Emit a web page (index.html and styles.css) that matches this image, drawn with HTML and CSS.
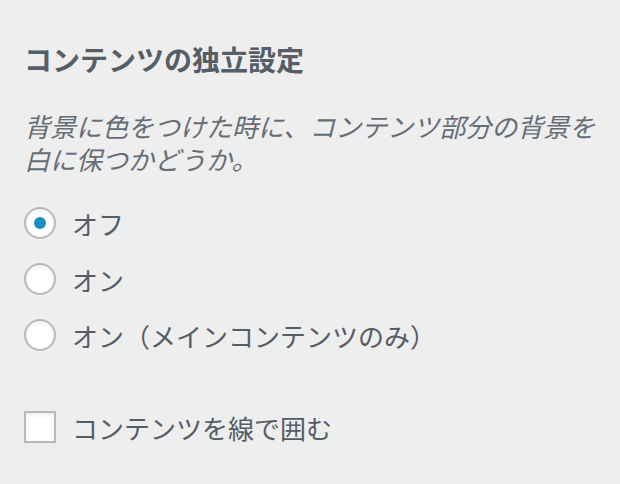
FILE: index.html
```html
<!DOCTYPE html>
<html lang="ja">
<head>
    <meta charset="UTF-8">
    <meta name="viewport" content="width=device-width, initial-scale=1.0">
    <title>コンテンツの独立設定</title>
    <link rel="stylesheet" href="styles.css">
</head>
<body>
    <div class="control">
        <h2 class="control-title">コンテンツの独立設定</h2>
        <p class="control-desc">背景に色をつけた時に、コンテンツ部分の背景を白に保つかどうか。</p>

        <div class="choices">
            <label class="choice">
                <input type="radio" name="content_bg" value="off" checked>
                <span>オフ</span>
            </label>
            <label class="choice">
                <input type="radio" name="content_bg" value="on">
                <span>オン</span>
            </label>
            <label class="choice">
                <input type="radio" name="content_bg" value="main">
                <span>オン（メインコンテンツのみ）</span>
            </label>
        </div>

        <label class="choice choice-check">
            <input type="checkbox" name="content_border">
            <span>コンテンツを線で囲む</span>
        </label>
    </div>
</body>
</html>
```

FILE: styles.css
```css
/* Customizer-style panel */
html, body {
    margin: 0;
    background: #eeeeee;
}

body {
    font-family: "Noto Sans CJK JP", "Noto Sans", sans-serif;
    color: #555d66;
}

.control {
    padding: 38px 24px 0 24px;
}

.control-title {
    margin: 0;
    font-size: 28px;
    line-height: 42px;
    font-weight: 700;
    color: #555d66;
}

.control-desc {
    margin: 29px 0 0 0;
    font-size: 26px;
    line-height: 33px;
    font-style: italic;
    color: #666d75;
}

.choices {
    margin-top: 20px;
}

.choice {
    display: flex;
    align-items: center;
    gap: 16px;
    height: 56px;
    font-size: 26px;
    cursor: pointer;
}

.choice-check {
    margin-top: 36px;
}

.choice input {
    appearance: none;
    -webkit-appearance: none;
    margin: 0;
    width: 32px;
    height: 32px;
    flex: none;
    box-sizing: border-box;
    border: 2px solid #b4b9be;
    background: #fff;
    box-shadow: inset 0 2px 4px rgba(0, 0, 0, 0.07);
    display: flex;
    align-items: center;
    justify-content: center;
}

.choice input[type="radio"] {
    border-radius: 50%;
}

.choice input[type="radio"]:checked::before {
    content: "";
    width: 12px;
    height: 12px;
    border-radius: 50%;
    background: #1e8cbe;
}
```
